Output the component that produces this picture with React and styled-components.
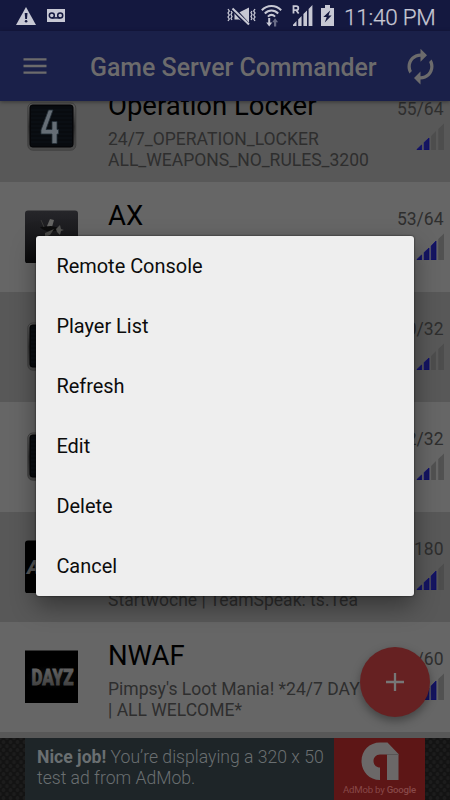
import React from 'react';
import styled, { createGlobalStyle } from 'styled-components';

const GlobalStyle = createGlobalStyle`
    * {
        box-sizing: border-box;
    }
    body {
        margin: 0;
        background-color: #666666;
        font-family: Roboto, "Liberation Sans", sans-serif;
    }
    svg {
        display: block;
        flex: none;
    }
`;

const Screen = styled.div`
    position: relative;
    display: flex;
    flex-direction: column;
    width: 450px;
    height: 800px;
    overflow: hidden;
`;

const StatusBar = styled.div`
    display: flex;
    align-items: center;
    height: 31px;
    padding: 0 15px 0 16px;
    background-color: #14183f;
    color: #c7c8d4;
`;

const StatusGroup = styled.div`
    display: flex;
    align-items: center;
    gap: ${props => props.$gap}px;
    margin-left: ${props => props.$push ? "auto" : "0"};
`;

const Clock = styled.span`
    width: 91px;
    margin-left: 2px;
    padding-top: 3px;
    font-size: 22.5px;
    font-weight: 300;
    line-height: 31px;
    letter-spacing: -0.25px;
    white-space: nowrap;
    -webkit-text-stroke: 0.25px currentColor;
`;

const AppBar = styled.header`
    position: relative;
    z-index: 1;
    display: flex;
    align-items: center;
    height: 70px;
    padding: 0 10px 0 23px;
    background-color: #1a2049;
    color: #6c6b6c;
    box-shadow: 0 1px 4px rgba(0, 0, 0, 0.4);
`;

const AppTitle = styled.h1`
    flex: 1;
    margin: 3px 0 0 43px;
    font-size: 24.9px;
    font-weight: 500;
    line-height: 30px;
    white-space: nowrap;
`;

const ServerViewport = styled.main`
    height: 637px;
    overflow: hidden;
`;

const ServerList = styled.div`
    margin-top: -29px;
`;

const ServerRow = styled.div`
    display: flex;
    height: 110px;
    padding: 18px 6px 0 25px;
    background-color: ${props => props.$shaded ? "#585858" : "#666666"};
`;

const Thumb = styled.div`
    width: 53px;
    height: 53px;
    margin: 10px 30px 0 0;
`;

const ServerInfo = styled.div`
    flex: 1;
    min-width: 0;
`;

const ServerName = styled.div`
    font-size: 27.5px;
    line-height: 32px;
    color: #000;
    white-space: nowrap;
`;

const ServerDescription = styled.div`
    margin-top: 7px;
    font-size: 17.55px;
    line-height: 20.5px;
    color: #2e2e2e;
    white-space: pre;
`;

const ServerStatus = styled.div`
    display: flex;
    flex-direction: column;
    align-items: flex-end;
    width: 60px;
    padding-top: 9px;
`;

const PlayerCount = styled.div`
    height: 24px;
    padding-right: 0.5px;
    font-size: 17.5px;
    line-height: 20.5px;
    color: #2e2e2e;
    white-space: nowrap;
`;

const AdStrip = styled.footer`
    display: flex;
    justify-content: center;
    height: 62px;
    background-color: #131313;
    background-image:
        radial-gradient(circle, #1c1c1c 1.6px, transparent 2.2px),
        radial-gradient(circle, #1c1c1c 1.6px, transparent 2.2px);
    background-size: 7px 8px;
    background-position: 0 0, 3.5px 4px;
`;

const AdText = styled.div`
    width: 309px;
    padding: 8.5px 0 0 12px;
    background-color: #1e2528;
    color: #6a6f71;
    font-size: 17.6px;
    font-weight: 300;
    line-height: 21px;
    white-space: nowrap;

    b {
        font-weight: 700;
    }
`;

const AdLogo = styled.div`
    display: flex;
    flex-direction: column;
    align-items: center;
    width: 91px;
    padding-top: 4px;
    background-color: #5d1616;
    color: #884848;
    font-size: 9.6px;
    line-height: 13px;

    span {
        margin-top: 3px;
        white-space: nowrap;
        letter-spacing: -0.2px;
    }

    b {
        font-weight: 500;
    }
`;

const AddButton = styled.button`
    position: absolute;
    right: 20px;
    bottom: 83px;
    display: flex;
    align-items: center;
    justify-content: center;
    width: 70px;
    height: 70px;
    padding: 0;
    border: none;
    border-radius: 50%;
    background-color: #662122;
    box-shadow: 0 4px 10px rgba(0, 0, 0, 0.35);
`;

const Menu = styled.div`
    position: absolute;
    z-index: 2;
    top: 235.5px;
    left: 36px;
    width: 378px;
    height: 360px;
    border-radius: 3px;
    background-color: #eeeeee;
    box-shadow: 0 0 2px rgba(0, 0, 0, 0.8), 0 10px 24px rgba(0, 0, 0, 0.4);
`;

const MenuItem = styled.div`
    height: 60px;
    padding-left: 20.4px;
    font-size: 19.95px;
    line-height: 61px;
    color: #0c0c0c;
`;

const WarningIcon = () => (
    <svg width="20" height="18" viewBox="0 0 20 18">
        <path d="M10 0L20 18H0z" fill="currentColor" />
        <path d="M8.7 6h2.8l-.5 6H9.2z" fill="#14183f" />
        <circle cx="10.1" cy="14.3" r="1.3" fill="#14183f" />
    </svg>
);

const VoicemailIcon = () => (
    <svg width="18" height="13" viewBox="0 0 18 13">
        <path d="M0 0h18v13H0z" fill="currentColor" />
        <g fill="none" stroke="#14183f" strokeWidth="1.5">
            <circle cx="4.8" cy="6.4" r="2.5" />
            <circle cx="13.2" cy="6.4" r="2.5" />
            <path d="M4.8 8.9h8.4" />
        </g>
    </svg>
);

const MuteVibrateIcon = () => (
    <svg width="27" height="20" viewBox="-1 0 27 20" overflow="visible">
        <g fill="none" stroke="currentColor" strokeWidth="1.3">
            <path d="M1 3l1.3 2L1 7l1.3 2L1 11l1.3 2L1 15M4 5l1 1.5-1 2 1 2-1 2 1 1.5" />
            <path d="M28 3l-1.3 2L28 7l-1.3 2L28 11l-1.3 2L28 15M25 5l-1 1.5 1 2-1 2 1 2-1 1.5" />
        </g>
        <path d="M7.5 6.5H12L22 1.5v17l-10-5H7.5z" fill="currentColor" />
        <path d="M5.5 2L21.5 19.5" stroke="#14183f" strokeWidth="4.6" />
        <path d="M5.5 2.5L22 18.5" stroke="currentColor" strokeWidth="2" />
    </svg>
);

const WifiIcon = () => (
    <svg width="23" height="22" viewBox="0 0 23 22">
        <g fill="none" stroke="currentColor" strokeWidth="2">
            <path d="M.8 5.2C6.2-.4 14.6-.4 20.2 5.2" />
            <path d="M3.8 8.5c3.9-4 9.5-4 13.4 0" />
            <path d="M6.9 11.6c2.3-2.2 4.9-2.2 7.2 0" />
        </g>
        <path d="M7.2 13h2v4.5h2l-3 4-3-4h2z" fill="currentColor" />
        <path d="M13 21.5h2.2v-4.2h1.9l-3-4.1-3 4.1H13z" fill="#696c86" />
    </svg>
);

const RoamingIcon = () => (
    <svg width="21" height="21" viewBox="0 0 21 21">
        <path d="M1.5 8.5V1.2h2.7c2.8 0 2.8 3.9 0 3.9H1.5M4 5l2.7 3.5" fill="none" stroke="currentColor" strokeWidth="1.8" />
        <path d="M1 21v-1.2L4.5 16v5zM6.2 21v-6.5L9.6 11v10zM11.4 21V9L15 5.5V21zM16.6 21V4L20.4 0v21z" fill="currentColor" />
    </svg>
);

const BatteryIcon = () => (
    <svg width="13" height="21" viewBox="0 0 13 21">
        <path d="M4 0h5v3h4v18H0V3h4z" fill="currentColor" />
        <path d="M9.2 5.5L2.3 12h3.4l-1.900 5.500 6.800-7H7.500z" fill="#14183f" />
    </svg>
);

const MenuIcon = () => (
    <svg width="24" height="16" viewBox="0 0 24 16">
        <path d="M.5 1.3h23M.5 8h23M.5 14.7h23" stroke="currentColor" strokeWidth="2.3" />
    </svg>
);

const RefreshIcon = () => (
    <svg width="39" height="39" viewBox="0 0 24 24">
        <path
            fill="currentColor"
            d="M12 6v3l4-4-4-4v3c-4.42 0-8 3.58-8 8 0 1.57.46 3.03 1.24 4.26L6.7 14.8c-.45-.83-.7-1.79-.7-2.8 0-3.31 2.69-6 6-6zm6.76 1.74L17.3 9.2c.44.84.7 1.79.7 2.8 0 3.31-2.69 6-6 6v-3l-4 4 4 4v-3c4.42 0 8-3.58 8-8 0-1.57-.46-3.03-1.24-4.26z"
        />
    </svg>
);

const signalBars = [
    'M1 27v-.6L5.6 22v5z',
    'M8.2 27v-7.500L13 15v12z',
    'M15.2 27V13L20 8v19z',
    'M22.3 27V6L28 .5V27z',
];

const Signal = ({ level, shaded }) => (
    <svg width="28" height="27" viewBox="0 0 28 27">
        {signalBars.map((d, i) => (
            <path
                key={d}
                d={d}
                fill={i < level ? '#15155f' : shaded ? '#4d4d4d' : '#515151'}
                stroke={i < level ? '#080872' : 'none'}
                strokeWidth="0.7"
            />
        ))}
    </svg>
);

const BattlefieldThumb = () => (
    <svg width="53" height="53" viewBox="0 0 53 53">
        <defs>
            <linearGradient id="bezel" x1="0" y1="0" x2="0" y2="1">
                <stop offset="0" stopColor="#606060" />
                <stop offset="0.5" stopColor="#303030" />
                <stop offset="1" stopColor="#4c4c4c" />
            </linearGradient>
        </defs>
        <rect x="2.8" y="3" width="48" height="47.2" rx="5" fill="url(#bezel)" stroke="#404040" />
        <rect x="5" y="5" width="43" height="42" rx="2.5" fill="#080b0f" stroke="#020304" />
        <path
            d="M6 10h41M6 14h41M6 18h41M6 22h41M6 26h41M6 30h41M6 34h41M6 38h41M6 42h41"
            stroke="#0d1318"
        />
        <path d="M23.5 10H28l-7 19.500h6v-8h5v8h1.500V34H32v9.500h-5V34H16v-4z" fill="#666e76" stroke="#253039" strokeWidth="0.8" />
    </svg>
);

const PlaneThumb = () => (
    <svg width="53" height="53" viewBox="0 0 53 53">
        <defs>
            <linearGradient id="sky" x1="0" y1="0" x2="0" y2="1">
                <stop offset="0" stopColor="#26262a" />
                <stop offset="0.7" stopColor="#121214" />
                <stop offset="1" stopColor="#09090a" />
            </linearGradient>
        </defs>
        <rect y="0.5" width="53" height="53" rx="3" fill="url(#sky)" />
        <path d="M25 9l4 1-2 7-4 2-1-3z" fill="#666664" />
        <path d="M15 17l11-1 9 2 1 2-12 2-7-3z" fill="#0d0d0d" />
        <path d="M20 23l9-4-4 6-5 2z" fill="#494947" />
        <path d="M31 19l4-4 1 4 3 1-3 1-1 4-3-3z" fill="#525250" />
        <path d="M16 10l3 7" stroke="#3a3a39" />
    </svg>
);

const ArmaThumb = () => (
    <svg width="53" height="53" viewBox="0 0 53 53">
        <rect y="0.5" width="53" height="53" rx="3" fill="#000" />
        <text x="2" y="34" fontSize="20" fontWeight="900" fontStyle="italic" fill="#555">A</text>
    </svg>
);

const DayzThumb = () => (
    <svg width="53" height="53" viewBox="0 0 53 53">
        <defs>
            <linearGradient id="dust" x1="0" y1="0" x2="0" y2="1">
                <stop offset="0" stopColor="#6a6a6a" />
                <stop offset="1" stopColor="#3a3a3a" />
            </linearGradient>
            <radialGradient id="haze">
                <stop offset="0" stopColor="#101010" />
                <stop offset="1" stopColor="#000" />
            </radialGradient>
        </defs>
        <rect y="0.5" width="53" height="52.5" fill="#000" />
        <ellipse cx="27" cy="27" rx="26" ry="12" fill="url(#haze)" />
        <text
            x="6.5"
            y="34.5"
            fontSize="22"
            fontWeight="900"
            textLength="42"
            lengthAdjust="spacingAndGlyphs"
            fill="url(#dust)"
            stroke="url(#dust)"
            strokeWidth="0.8"
        >
            DAYZ
        </text>
    </svg>
);

const AdMobIcon = () => (
    <svg width="38" height="38" viewBox="0 0 38 38">
        <path d="M19 38C8 38 .5 29.5 .5 19S8.5 .5 19 .5h7.5L37.5 12v26H26V12.5h-7c-4 0-6.5 3-6.5 6.5s2.5 6.5 6.5 6.5z" fill="#6b6868" />
        <path d="M26 12.5h11.5" stroke="#595555" />
    </svg>
);

const PlusIcon = () => (
    <svg width="18" height="18" viewBox="0 0 18 18">
        <path d="M9 0v18M0 9h18" stroke="#777" strokeWidth="2.3" />
    </svg>
);

const servers = [
    { name: 'Operation Locker', description: '24/7_OPERATION_LOCKER\nALL_WEAPONS_NO_RULES_3200', players: '55/64', level: 2, thumb: BattlefieldThumb },
    { name: 'AX', description: '', players: '53/64', level: 3, thumb: PlaneThumb },
    { name: '', description: '', players: '0/32', level: 2, thumb: BattlefieldThumb },
    { name: '', description: '', players: '2/32', level: 2, thumb: BattlefieldThumb },
    { name: '', description: '\nStartwoche | TeamSpeak: ts.Tea', players: '180', level: 3, thumb: ArmaThumb },
    { name: 'NWAF', description: "Pimpsy's Loot Mania! *24/7 DAY\n| ALL WELCOME*", players: '/60', level: 3, thumb: DayzThumb },
];

const menuItems = ['Remote Console', 'Player List', 'Refresh', 'Edit', 'Delete', 'Cancel'];

const Server = ({ server, shaded }) => {
    const Picture = server.thumb;

    return (
        <ServerRow $shaded={shaded}>
            <Thumb>
                <Picture />
            </Thumb>
            <ServerInfo>
                <ServerName>{server.name || '\u00a0'}</ServerName>
                <ServerDescription>{server.description}</ServerDescription>
            </ServerInfo>
            <ServerStatus>
                <PlayerCount>{server.players}</PlayerCount>
                <Signal level={server.level} shaded={shaded} />
            </ServerStatus>
        </ServerRow>
    );
};

const App = () => {
    return (
        <>
            <GlobalStyle />
            <Screen>
                <StatusBar>
                    <StatusGroup $gap={11}>
                        <WarningIcon />
                        <VoicemailIcon />
                    </StatusGroup>
                    <StatusGroup $gap={8} $push>
                        <MuteVibrateIcon />
                        <WifiIcon />
                        <RoamingIcon />
                        <BatteryIcon />
                        <Clock>11:40 PM</Clock>
                    </StatusGroup>
                </StatusBar>
                <AppBar>
                    <MenuIcon />
                    <AppTitle>Game Server Commander</AppTitle>
                    <RefreshIcon />
                </AppBar>
                <ServerViewport>
                    <ServerList>
                        {servers.map((server, i) => (
                            <Server key={i} server={server} shaded={i % 2 === 0} />
                        ))}
                        <ServerRow $shaded />
                    </ServerList>
                </ServerViewport>
                <AdStrip>
                    <AdText>
                        <b>Nice job!</b> You’re displaying a 320 x 50<br />
                        test ad from AdMob.
                    </AdText>
                    <AdLogo>
                        <AdMobIcon />
                        <span>AdMob by <b>Google</b></span>
                    </AdLogo>
                </AdStrip>
                <AddButton aria-label="Add">
                    <PlusIcon />
                </AddButton>
                <Menu>
                    {menuItems.map(item => (
                        <MenuItem key={item}>{item}</MenuItem>
                    ))}
                </Menu>
            </Screen>
        </>
    );
};

export default App;
